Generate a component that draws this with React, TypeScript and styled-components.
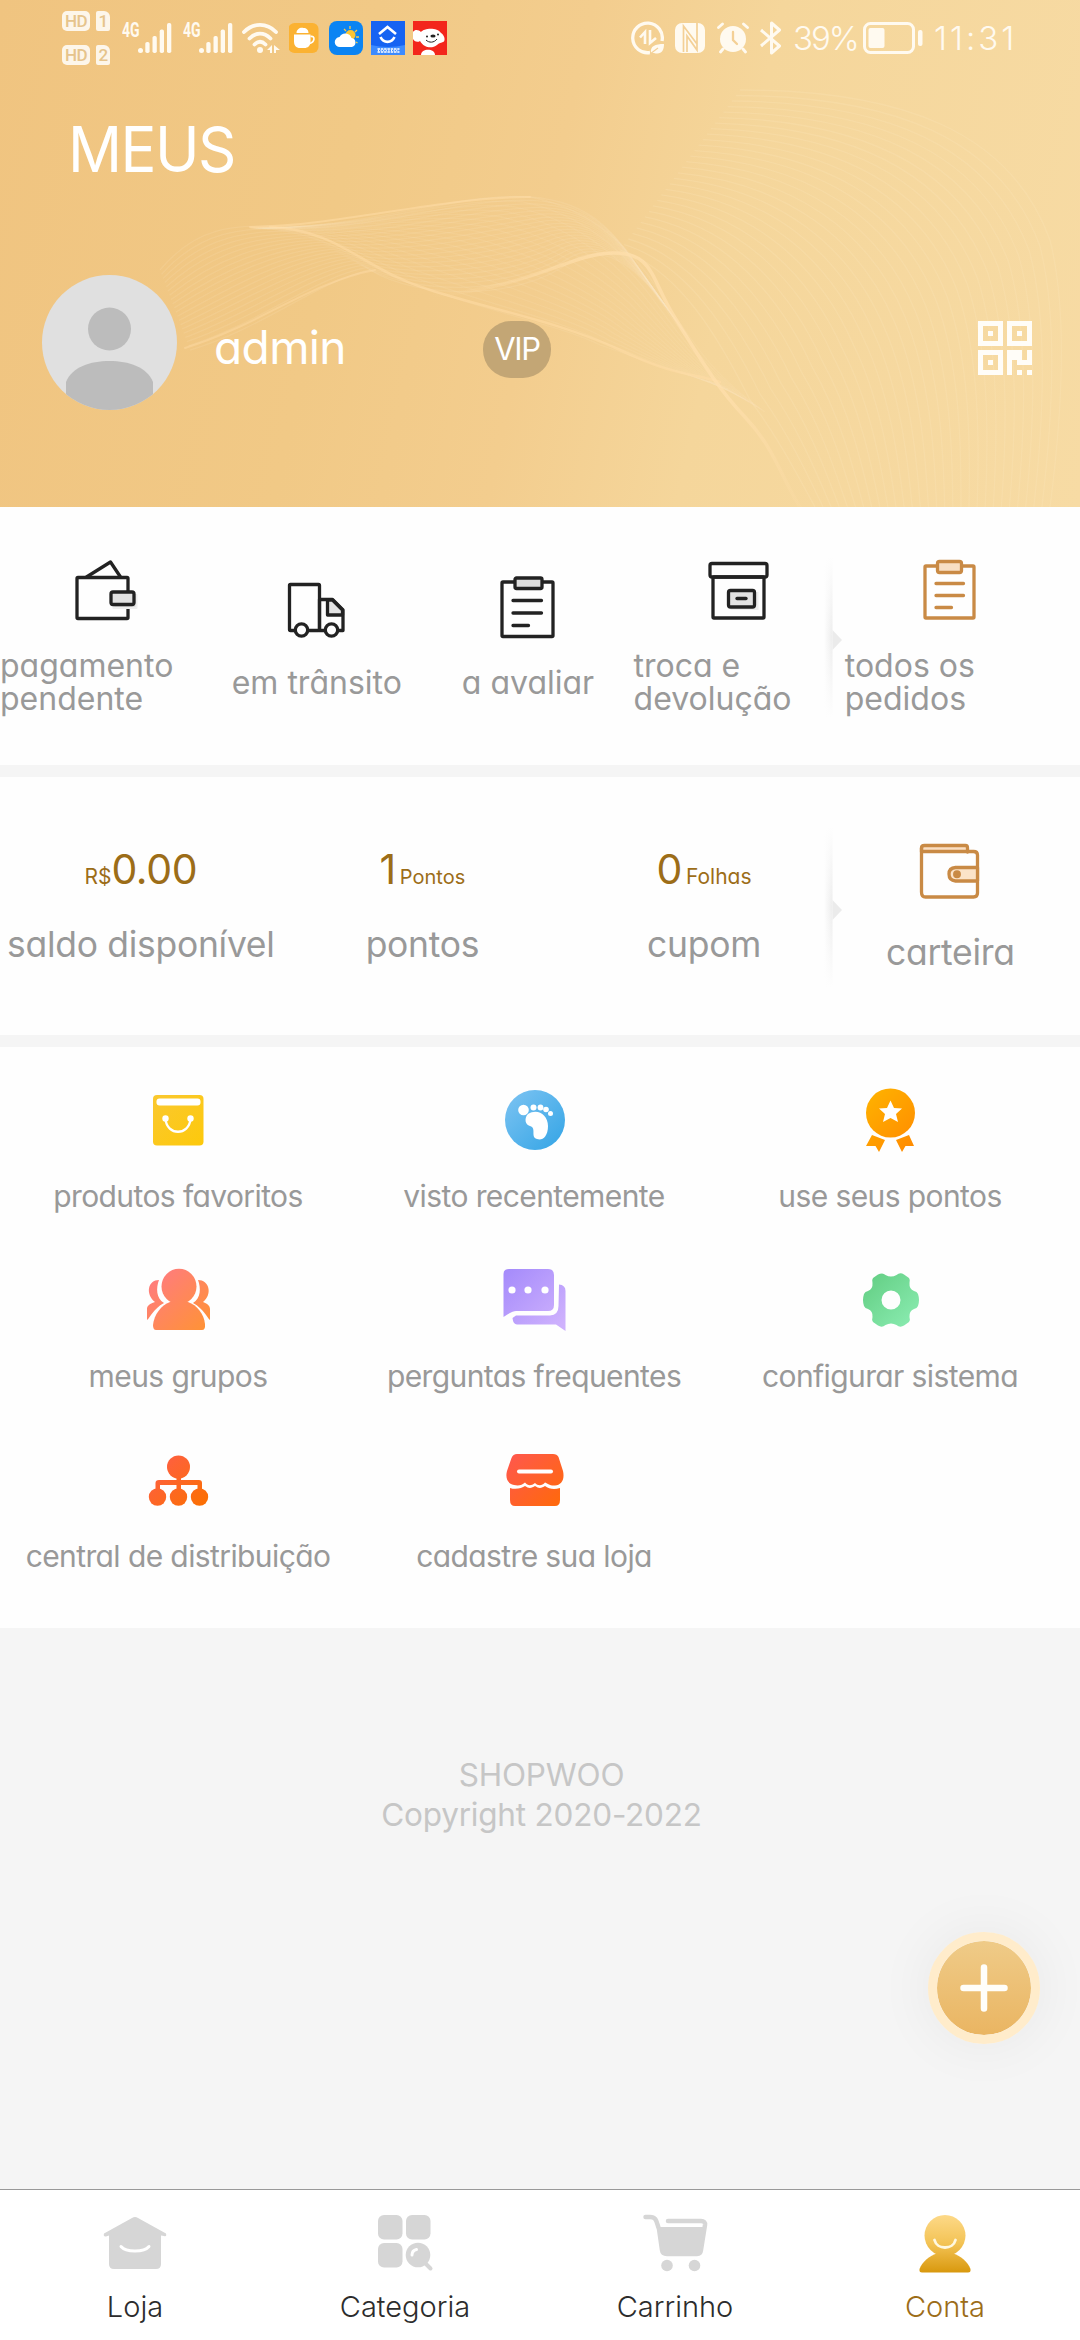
import React from "react";
import styled, { createGlobalStyle, css } from "styled-components";

const gold = "#9c6d18";
const gray = "#999999";
const ink = "#222222";
const amber = "#c98a45";

const GlobalStyle = createGlobalStyle`
  * { box-sizing: border-box; }
  body { margin: 0; background: #f5f5f5; }
  svg { display: block; flex: none; }
`;

const Screen = styled.div`
  width: 1080px;
  height: 2340px;
  display: flex;
  flex-direction: column;
  position: relative;
  overflow: hidden;
  background: #f5f5f5;
  font-family: Inter, "Open Sans", "Noto Sans", sans-serif;
  font-feature-settings: "cv11";
  color: ${gray};
`;

/* ---------- header ---------- */

const Header = styled.header`
  height: 507px;
  flex: none;
  position: relative;
  display: flex;
  flex-direction: column;
  color: #fff;
  background: linear-gradient(102deg, #f0c480 0%, #f1c986 32%, #f3cd8e 50%, #f5d69b 66%, #f7dba4 100%);
`;

const WaveLayer = styled.svg`
  position: absolute;
  inset: 0;
`;

const StatusBar = styled.div`
  height: 75px;
  display: flex;
  justify-content: space-between;
  align-items: center;
  padding: 0 65px 0 62px;
  position: relative;
  color: #fffaf0;
`;

const StatusLeft = styled.div`
  display: flex;
  align-items: center;
  gap: 9px;
`;

const StatusRight = styled.div`
  display: flex;
  align-items: center;
  gap: 11px;
`;

const Sims = styled.div`
  width: 51px;
  display: flex;
  flex-direction: column;
  gap: 14px;
`;

const SimRow = styled.div`
  display: flex;
  gap: 6px;
`;

const Chip = styled.span<{ $w: number; $card?: boolean }>`
  width: ${(p) => p.$w}px;
  height: 20px;
  border-radius: ${(p) => (p.$card ? "2px 6px 2px 2px" : "5px")};
  background: #fdf6ea;
  color: #e6c48c;
  font: 500 17px/21px Roboto, sans-serif;
  letter-spacing: -0.5px;
  text-align: center;
`;

const Signal = styled.div<{ $w: number }>`
  width: ${(p) => p.$w}px;
  height: 32px;
  display: flex;
  align-items: flex-start;
`;

const Network = styled.span`
  width: 16px;
  font: 700 20px/16px Roboto, sans-serif;
  transform: scaleX(0.7);
  transform-origin: left;
`;

const Apps = styled.div`
  display: flex;
  align-items: center;
  gap: 8px;
`;

const StatusText = styled.span<{ $w: number; $ls: number }>`
  width: ${(p) => p.$w}px;
  font-size: 33px;
  font-weight: 300;
  line-height: 36px;
  letter-spacing: ${(p) => p.$ls}px;
  white-space: nowrap;
`;

const Title = styled.h1`
  margin: 0;
  padding: 36px 0 0 68px;
  font-size: 63px;
  font-weight: 400;
  line-height: 76px;
  letter-spacing: -1.6px;
  position: relative;
  transform: scaleX(0.95);
  transform-origin: 68px 0;
`;

const Profile = styled.div`
  position: relative;
  display: flex;
  align-items: center;
  padding: 0 48px 0 42px;
  margin-top: 88px;
  height: 135px;
`;

const UserName = styled.div`
  width: 269px;
  margin-left: 37px;
  padding-top: 8px;
  font-size: 46px;
  line-height: 56px;
  letter-spacing: -0.6px;
`;

const Badge = styled.div`
  width: 68px;
  height: 57px;
  margin-top: 14px;
  border-radius: 28px;
  background: #c3a675;
  font-size: 31px;
  line-height: 55px;
  letter-spacing: -1.4px;
  text-align: center;
`;

const QrButton = styled.div`
  margin-left: auto;
  margin-top: 11px;
`;

/* ---------- sections ---------- */

const Section = styled.section<{ $h: number }>`
  height: ${(p) => p.$h}px;
  flex: none;
  position: relative;
  display: flex;
  align-items: center;
  background: #fefefe;
  margin-bottom: 12px;
  padding-bottom: 3px;
`;

const OrderItem = styled.div`
  width: 211.2px;
  display: flex;
  flex-direction: column;
  align-items: center;
  gap: 23px;
`;

const OrderLabel = styled.div<{ $wrap?: boolean }>`
  font-size: 32px;
  line-height: 33px;
  ${(p) =>
    p.$wrap
      ? css`
          align-self: stretch;
          padding-right: 20px;
        `
      : css`
          white-space: nowrap;
        `}
`;

const Notch = styled.div`
  position: absolute;
  left: 824px;
  top: 50px;
  width: 20px;
  height: 160px;
`;

const Stat = styled.div<{ $w: number; $gap: number }>`
  width: ${(p) => p.$w}px;
  display: flex;
  flex-direction: column;
  align-items: center;
  gap: ${(p) => p.$gap}px;
`;

const StatLabel = styled.div`
  font-size: 35.5px;
  line-height: 44px;
  letter-spacing: -0.3px;
  white-space: nowrap;
`;

const Value = styled.div<{ $gap: number }>`
  display: flex;
  align-items: baseline;
  gap: ${(p) => p.$gap}px;
  color: ${gold};
  font-size: 41px;
  line-height: 50px;
  padding-top: 1px;
`;

const Unit = styled.span<{ $size: number }>`
  font-size: ${(p) => p.$size}px;
  line-height: 24px;
`;

const Num = styled.span`
  letter-spacing: -0.4px;
`;

const Services = styled.section`
  height: 581px;
  flex: none;
  background: #fefefe;
  display: grid;
  grid-template-columns: repeat(3, 356px);
  grid-auto-rows: 180px;
  padding-top: 33px;
`;

const Service = styled.div`
  display: flex;
  flex-direction: column;
  align-items: center;
  gap: 18px;
`;

const ServiceLabel = styled.div`
  font-size: 30px;
  line-height: 36px;
  letter-spacing: -0.6px;
  white-space: nowrap;
`;

const Footer = styled.footer`
  flex: 1;
  padding: 127px 0 0 3px;
  text-align: center;
  font-size: 31.5px;
  line-height: 40px;
  letter-spacing: -0.2px;
  color: #c6c6c6;
`;

const AddButton = styled.button`
  position: absolute;
  left: 928px;
  top: 1932px;
  width: 112px;
  height: 112px;
  padding: 0;
  display: grid;
  place-items: center;
  border: 9px solid #ffeccb;
  border-radius: 50%;
  background: linear-gradient(#efcb88, #eab562) padding-box;
  box-shadow: 0 0 60px rgba(0, 0, 0, 0.06);
`;

const Tabs = styled.nav`
  height: 151px;
  flex: none;
  display: flex;
  background: #fff;
  border-top: 1px solid #999;
`;

const Tab = styled.div<{ $active?: boolean }>`
  flex: 1;
  display: flex;
  flex-direction: column;
  align-items: center;
  padding-top: 17px;
  gap: 10px;
  color: ${(p) => (p.$active ? gold : "#2c2c2c")};
  font-size: 29px;
  font-weight: 350;
  line-height: 36px;
  font-feature-settings: normal;
`;

/* ---------- header artwork ---------- */

type Pts = number[];

function mix(a: Pts, b: Pts, t: number): string {
  const p = a.map((v, i) => (v + (b[i] - v) * t).toFixed(1));
  let d = `M${p[0]} ${p[1]}`;
  for (let i = 2; i < p.length; i += 6) {
    d += `C${p.slice(i, i + 6).join(" ")}`;
  }
  return d;
}

function Family({ a, b, n, o }: { a: Pts; b: Pts; n: number; o: number }) {
  return (
    <g stroke="#ffe9c4" strokeOpacity={o} fill="none" strokeWidth={1.3}>
      {Array.from({ length: n }, (_, i) => (
        <path key={i} d={mix(a, b, i / (n - 1))} />
      ))}
    </g>
  );
}

const Waves = () => (
  <WaveLayer width="1080" height="507" viewBox="0 0 1080 507">
    <defs>
      <linearGradient id="crest" gradientUnits="userSpaceOnUse" x1="430" y1="0" x2="800" y2="0">
        <stop offset="0" stopColor="#ffdca6" stopOpacity="0" />
        <stop offset=".45" stopColor="#ffdfac" />
        <stop offset=".8" stopColor="#ffdfac" />
        <stop offset="1" stopColor="#ffdfac" stopOpacity=".2" />
      </linearGradient>
    </defs>
    <Family
      a={[160, 270, 200, 222, 240, 226, 290, 226, 380, 224, 460, 192, 530, 197, 600, 202, 620, 240, 660, 300]}
      b={[190, 350, 260, 330, 320, 280, 370, 270, 420, 300, 520, 300, 570, 262, 610, 235, 650, 280, 690, 340]}
      n={20}
      o={0.14}
    />
    <Family
      a={[250, 228, 320, 228, 360, 262, 400, 280, 480, 310, 560, 325, 600, 345, 650, 362, 680, 375, 720, 384]}
      b={[270, 228, 400, 224, 460, 192, 530, 197, 600, 210, 640, 260, 665, 300, 700, 355, 720, 380, 765, 412]}
      n={18}
      o={0.13}
    />
    <Family
      a={[620, 250, 680, 270, 720, 340, 750, 400, 780, 440, 800, 480, 815, 507]}
      b={[740, 90, 900, 90, 1010, 130, 1050, 240, 1070, 320, 1060, 430, 1050, 507]}
      n={30}
      o={0.2}
    />
    <g fill="none" stroke="#ffdca6" strokeLinecap="round">
      <path d="M250 227C340 226 440 197 530 197" strokeWidth="2" opacity=".55" />
      <path d="M270 227C340 230 360 268 430 290S560 322 620 350S690 372 720 382" strokeWidth="2.5" opacity=".55" />
      <path d="M185 348C260 325 310 282 375 270" strokeWidth="2" opacity=".45" />
      <path d="M430 296C530 288 570 254 612 253S650 278 675 318S715 385 745 417S780 475 800 507" stroke="url(#crest)" strokeWidth="3.500" opacity=".75" />
    </g>
  </WaveLayer>
);

const Avatar = () => (
  <svg width="135" height="135" viewBox="0 0 135 135">
    <clipPath id="avatarClip"><circle cx="67.5" cy="67.5" r="67.5" /></clipPath>
    <g clipPath="url(#avatarClip)">
      <rect width="135" height="135" fill="#e0e0e0" />
      <circle cx="67.5" cy="54" r="21.5" fill="#bcbcbc" />
      <path d="M24 140V107C30 92 48 86 67.500 86S105 92 111 107V140Z" fill="#bcbcbc" />
    </g>
  </svg>
);

const QrIcon = () => (
  <svg width="54" height="54" viewBox="0 0 54 54" fill="#fffdf8">
    <path fillRule="evenodd" d="M0 0h25v25H0zM5 5v15h15V5zM29 0h25v25H29zM34 5v15h15V5zM0 29h25v25H0zM5 34v15h15V34z" />
    <path d="M10 10h5v5h-5zM39 10h5v5h-5zM10 39h5v5h-5zM29 29h15v10h5V29h5v15H39v-5h-5v15h-5zM39 49h5v5h-5zM49 49h5v5h-5z" />
  </svg>
);

const Bars = () => (
  <svg width="34" height="32" viewBox="0 0 34 32" fill="#fffaf0">
    <circle cx="2.500" cy="28.500" r="2.500" />
    <rect x="7.300" y="20" width="4.300" height="11" rx="1.800" />
    <rect x="14.500" y="14" width="4.300" height="17" rx="1.800" />
    <rect x="21.700" y="7.500" width="4.300" height="23.500" rx="1.800" />
    <rect x="29" y="1" width="4.300" height="30" rx="1.800" />
  </svg>
);

const Wifi = () => (
  <svg width="38" height="32" viewBox="0 0 38 32" fill="none" stroke="#fffaf0" strokeWidth="3.800" strokeLinecap="round">
    <path d="M2 10C11 .5 25 .5 34 10M7.500 16.500C14 10 22 10 28.500 16.500M12.500 22.500C16 19 20 19 23.500 22.500" />
    <circle cx="18" cy="28" r="3" fill="#fffaf0" stroke="none" />
    <path d="M30 23v8h-2v-3h-3zM32 23l6 5h-4v3h-2z" fill="#fffaf0" stroke="none" />
  </svg>
);

const CupApp = () => (
  <svg width="32" height="34" viewBox="0.500 0 32 34">
    <rect y="2" width="30" height="30" rx="6" fill="#fbb232" />
    <path d="M5.500 13.500h16.500v7c0 4.500-3 6.500-6 6.500h-4.500c-4 0-6-2.500-6-6.500z" fill="#fff" />
    <path d="M8 12C8 8 12 6 15 7C18 7 20 9 20 12Z" fill="#fff" />
    <path d="M22 15.500c5-1 4.500 5.500-1 7" fill="none" stroke="#fff" strokeWidth="1.600" />
  </svg>
);

const WeatherApp = () => (
  <svg width="34" height="34" viewBox="0 0 34 34">
    <rect width="34" height="34" rx="8" fill="#0b84f3" />
    <path d="M21 5v3M28 9l-2 2M30 16h-3M15 8l2 2M27 21l1.500 1" stroke="#f7c948" strokeWidth="1.300" />
    <circle cx="21.500" cy="14" r="5" fill="#fcc531" />
    <path d="M11 26a5 5 0 0 1-.5-10a6.500 6.500 0 0 1 12 1a4.600 4.600 0 0 1 .5 9z" fill="#fff" />
  </svg>
);

const CarApp = () => (
  <svg width="34" height="34" viewBox="0 0 34 34">
    <rect width="34" height="34" fill="#1663f2" />
    <path d="M0 24Q17 28 34 24V34H0z" fill="#3d8bff" />
    <path d="M8 13l8.500-7L25 13M9.500 16c3 6.500 11 6.500 14 0" fill="none" stroke="#fff" strokeWidth="2.600" />
    <path d="M6.500 28h22M6.500 31h22" stroke="#fff" strokeWidth="1.500" strokeDasharray="2.500 0.800" />
    <path d="M7 29.500h21" stroke="#fff" strokeWidth="1.500" strokeDasharray="1 1.600" />
  </svg>
);

const DogApp = () => (
  <svg width="34" height="34" viewBox="0 0 34 34">
    <rect width="34" height="34" fill="#f3261c" />
    <path d="M0 11C2 8 6 9 8 11C11 7 24 6 28 12C31 14 32.500 18 31 20.500C28 22 26 22 24 24C19 28 11 27 7 20C4 22 1 20 0 18z" fill="#fff" />
    <path d="M8 34C8 27 22 27 22 34z" fill="#fff" />
    <ellipse cx="20" cy="15" rx="2.600" ry="1.500" fill="#222" />
    <circle cx="14" cy="15.500" r="1" fill="#222" /><circle cx="25" cy="13.500" r="1" fill="#222" />
    <path d="M13 19c3 3 8 3 11-1" stroke="#222" strokeWidth="1" fill="none" />
  </svg>
);

const EcoIcon = () => (
  <svg width="33" height="34" viewBox="0 0 33 34" fill="none" stroke="#fffaf0">
    <path d="M31 20A14.800 14.800 0 1 0 19 31.500" strokeWidth="3.300" />
    <path d="M9 16.500l5-5.500v12M19 9v13l6-5" strokeWidth="2.600" />
    <path d="M20 32c-1-7 4-9 13-9c0 7-3 11-10 9z" fill="#fffaf0" stroke="none" />
    <path d="M19 33l8-6" stroke="#f4d096" strokeWidth="1.200" />
  </svg>
);

const NfcIcon = () => (
  <svg width="31" height="32" viewBox="0 0 31 32">
    <rect y="1" width="30" height="30" rx="7" fill="#fffaf0" />
    <path d="M8.500 30V4L22 22V1M8.500 4V30M22 2V28L12 14V30" fill="none" stroke="#f4d096" strokeWidth="1.700" />
  </svg>
);

const AlarmIcon = () => (
  <svg width="32" height="32" viewBox="0 0 32 32" fill="none" stroke="#fffaf0" strokeLinecap="round">
    <circle cx="16" cy="17" r="13" fill="#fffaf0" stroke="none" />
    <path d="M1.500 5.500l4-3.500M30.500 5.500l-4-3.500M6 27l-2.500 3M26 27l2.500 3" strokeWidth="2.800" />
    <path d="M16 10v8l4 4" stroke="#f4d096" strokeWidth="2.300" />
  </svg>
);

const BluetoothIcon = () => (
  <svg width="22" height="36" viewBox="0 0 22 36" fill="none" stroke="#fffaf0" strokeWidth="3" strokeLinejoin="round">
    <path d="M1 10L19.500 26L11.500 33V3L19.500 10L1 26" />
  </svg>
);

const BatteryIcon = () => (
  <svg width="60" height="34" viewBox="0 0 60 34">
    <rect x="1.500" y="2.500" width="49" height="29" rx="6" fill="none" stroke="#fffaf0" strokeWidth="3" />
    <rect x="5.500" y="7" width="16" height="20" rx="2" fill="#fffaf0" />
    <rect x="55" y="9" width="4.500" height="16" rx="2" fill="#fffaf0" />
  </svg>
);

/* ---------- order icons ---------- */

const LineIcon = ({ color = ink, children }: { color?: string; children: React.ReactNode }) => (
  <svg width="72" height="72" viewBox="0.500 0 72 72" fill="none" stroke={color} strokeWidth="3.300" strokeLinejoin="round" strokeLinecap="round">
    {children}
  </svg>
);

const PayIcon = () => (
  <LineIcon>
    <path d="M17 23L41 8L51 23" />
    <rect x="7.500" y="23.500" width="51" height="41" rx="1" />
    <rect x="44" y="41" width="23" height="13" fill="#ddd" stroke="#eee" strokeWidth="2" />
    <rect x="41.500" y="38" width="23" height="12.500" rx="2" fill="#e2e2e2" />
  </LineIcon>
);

const TruckIcon = () => (
  <LineIcon>
    <rect x="9" y="13.500" width="30" height="46" rx="1" />
    <path d="M39 28.500H52L62.500 39V59.500H39Z" />
    <path d="M47 29V44H62V39L52 29Z" fill="#e4e4e4" />
    <circle cx="21" cy="59" r="6.200" fill="#fefefe" />
    <circle cx="51" cy="59" r="6.200" fill="#fefefe" />
  </LineIcon>
);

const ReviewIcon = () => (
  <LineIcon>
    <rect x="10.500" y="11" width="51" height="54.500" rx="1" />
    <rect x="23.500" y="7" width="27" height="10.500" rx="1.500" fill="#dedede" />
    <path d="M21.500 29.500H50M21.500 42H50M21.500 54.500H37" />
  </LineIcon>
);

const ReturnIcon = () => (
  <LineIcon>
    <rect x="7.500" y="9.500" width="57" height="13.500" rx="2" />
    <rect x="10.500" y="23" width="51" height="41" rx="1" />
    <rect x="28" y="38" width="28" height="18" fill="#eee" stroke="none" />
    <rect x="26" y="36.500" width="26" height="16.500" rx="2" fill="#e2e2e2" />
    <path d="M34.500 44.500H43.500" />
  </LineIcon>
);

const OrdersIcon = () => (
  <LineIcon color={amber}>
    <rect x="11.500" y="12" width="49" height="52" rx="1" />
    <rect x="24" y="7.500" width="24" height="11" rx="2" fill="#f8dfc4" />
    <path d="M22.500 29.500H50M22.500 41.500H50M22.500 53.500H38" />
  </LineIcon>
);

const WalletIcon = () => (
  <LineIcon color={amber}>
    <path d="M8 17V13Q8 10.500 11 10.500H52Q54 10.500 54 13V17" fill="#fbdfc3" />
    <path d="M8 13V57Q8 62 12 62H60Q64 62 64 58V20Q64 16.500 60 16.500H10" />
    <path d="M64 32.500H42Q35.500 33 35.500 39Q35.500 45.500 42 46H64Z" fill="#fbe3c9" />
    <circle cx="43.500" cy="39.300" r="2.300" fill={amber} />
  </LineIcon>
);

const NotchShape = () => (
  <Notch>
    <svg width="20" height="160" viewBox="0 0 20 160">
      <defs>
        <linearGradient id="nx"><stop offset="0" stopColor="#fefefe" /><stop offset="1" stopColor="#ececec" /></linearGradient>
        <linearGradient id="ny" x1="0" y1="0" x2="0" y2="1">
          <stop offset="0" stopColor="#fefefe" /><stop offset=".5" stopColor="#fefefe" stopOpacity="0" /><stop offset="1" stopColor="#fefefe" />
        </linearGradient>
      </defs>
      <rect width="8.500" height="160" fill="url(#nx)" />
      <rect width="9" height="160" fill="url(#ny)" />
      <path d="M8.500 73L18 83L8.500 93Z" fill="#ebebeb" />
    </svg>
  </Notch>
);

/* ---------- service icons ---------- */

const ColorIcon = ({ id, from, to, children }: { id: string; from: string; to: string; children: React.ReactNode }) => (
  <svg width="80" height="80" viewBox="0 0 80 80" fill={`url(#${id})`}>
    <linearGradient id={id} gradientUnits="userSpaceOnUse" x1="12" y1="12" x2="66" y2="68">
      <stop offset="0" stopColor={from} />
      <stop offset="1" stopColor={to} />
    </linearGradient>
    {children}
  </svg>
);

const services: { label: string; icon: React.ReactNode }[] = [
  {
    label: "produtos favoritos",
    icon: (
      <ColorIcon id="bag" from="#fac832" to="#fdc90a">
        <rect x="15" y="15" width="50.500" height="50.500" rx="4" />
        <rect x="18.500" y="18.500" width="44" height="7" rx="3" fill="#fff" />
        <g fill="#fff"><circle cx="27.500" cy="38.500" r="3.200" /><circle cx="52.500" cy="38.500" r="3.200" /></g>
        <path d="M27.500 39C29 56 51 56 52.500 39" fill="none" stroke="#fff" strokeWidth="2.400" />
      </ColorIcon>
    ),
  },
  {
    label: "visto recentemente",
    icon: (
      <ColorIcon id="foot" from="#7cc3f2" to="#37a6e6">
        <circle cx="41" cy="40" r="30" />
        <g fill="#fff">
          <path d="M34 34C43 28 54 34 54 46C54 57 48 61 43 59C36 57 43 48 36 46C31 45 30 38 34 34Z" />
          <circle cx="29.500" cy="30" r="5.300" /><circle cx="39.500" cy="27.500" r="3" />
          <circle cx="46.500" cy="27.500" r="2.900" /><circle cx="52" cy="29.500" r="2.800" /><circle cx="56.500" cy="33.500" r="2.500" />
        </g>
      </ColorIcon>
    ),
  },
  {
    label: "use seus pontos",
    icon: (
      <ColorIcon id="medal" from="#ffb400" to="#ff8a00">
        <circle cx="40.500" cy="33" r="24.500" />
        <path d="M22 55L35 60L29 72L25.500 66L16 66ZM59 55L46 60L52 72L55.500 66L64 66Z" />
        <path d="M40.500 20.500L44 28L52 28.500L46 34L48 42L40.500 38L33 42L35 34L29 28.500L37 28Z" fill="#fff" />
      </ColorIcon>
    ),
  },
  {
    label: "meus grupos",
    icon: (
      <ColorIcon id="group" from="#ff7a83" to="#ff9238">
        <path d="M21 20C10 20 7 34 17 42C11 44 9 46 9 49V60C12 58 15 49 26 43C18 38 18 28 21 20ZM60 20C71 20 75 34 65 42C70 44 72 46 72 49V60C69 58 66 49 55 43C63 38 63 28 60 20Z" />
        <ellipse cx="41" cy="26.500" rx="17.500" ry="17.800" />
        <path d="M32 42H50C59 45 66 54 67 64Q67.500 70 64 70H18Q15 70 15 65C16 55 23 45 32 42Z" />
      </ColorIcon>
    ),
  },
  {
    label: "perguntas frequentes",
    icon: (
      <ColorIcon id="chat" from="#a68cfb" to="#cfb2fd">
        <path d="M9.500 14Q9.500 9 15 9H54Q60 9 60 15V45Q60 51 54 51H22Q18 51 9.500 57Z" />
        <path d="M65 24.500Q71.500 25 71.500 31V71L62 64.500H23Q19 64 18.500 58L22 55.500H56Q64.500 55 64.500 46Z" />
        <g fill="#fff"><circle cx="18" cy="30" r="3.600" /><circle cx="34" cy="30" r="3.600" /><circle cx="51" cy="30" r="3.600" /></g>
      </ColorIcon>
    ),
  },
  {
    label: "configurar sistema",
    icon: (
      <ColorIcon id="gear" from="#60cc80" to="#8cedb3">
        <path
          fillRule="evenodd"
          d="M32 13.500Q34 13.500 35.500 15Q41 18 46.500 15Q50 12 54 14.500L59 18Q60.500 20 59.500 23Q59 29 64 31Q67 31.500 68 34Q70 40 68 46Q67 48.500 64 49Q59 51 59.500 57Q60.500 60 59 62L54 65.500Q50 68 46.500 65Q41 62 35.500 65Q32 68 28 65.500L23 62Q21.500 60 22.500 57Q23 51 18 49Q15 48.500 14 46Q12 40 14 34Q15 31.500 18 31Q23 29 22.500 23Q21.500 20 23 18L28 14.500Q30 13.500 32 13.500ZM41 30.500A9.500 9.500 0 1 0 41 49.500A9.500 9.500 0 1 0 41 30.500Z"
        />
      </ColorIcon>
    ),
  },
  {
    label: "central de distribuição",
    icon: (
      <ColorIcon id="org" from="#ff5c4e" to="#fb7000">
        <circle cx="40.500" cy="27" r="11.500" />
        <path d="M38.500 36H43V40H61Q64 40 64 43V52H59.500V45H43V52H38.500V45H22V52H17.500V43Q17.500 40 21 40H38.500Z" />
        <circle cx="19.500" cy="57" r="8.700" /><circle cx="40.500" cy="57" r="8.700" /><circle cx="61.500" cy="57" r="8.700" />
      </ColorIcon>
    ),
  },
  {
    label: "cadastre sua loja",
    icon: (
      <ColorIcon id="shop" from="#ff5651" to="#ff6a09">
        <path d="M23 14H59Q63 14 64.500 17L69 31C71 40 67 45 61 45.500C56 46 53 43 51 42.500C48 46 44 46 41 43C37 46 34 46 31 42.500C28 45 25 46 20 45C14 44 11 38 13 31L17.500 18Q19 14 23 14Z" />
        <path d="M16 48C22 50 28 48 31 46C35 49 38 48 41 46C45 49 48 48 51 46C55 49 60 50 66 48V60Q66 66 61 66H21Q16 66 16 60Z" />
        <path d="M25 31.500H57" stroke="#fff" strokeWidth="4" strokeLinecap="round" />
      </ColorIcon>
    ),
  },
];

/* ---------- tab icons ---------- */

const TabIcon = ({ children }: { children: React.ReactNode }) => (
  <svg width="72" height="72" viewBox="0 0 72 72" fill="#d6d6d6">
    {children}
  </svg>
);

const HomeTab = () => (
  <TabIcon>
    <path d="M33 11Q36 9 39 11L67 26.500Q68 30 65 29L62 28.500V57Q62 62 57 62H15Q10 62 10 57V28.500L7 29.500Q4 30 5 26.500Z" />
    <path d="M22 39.500C27 45.500 45 45.500 50 39.500" fill="none" stroke="#fff" strokeWidth="3" strokeLinecap="round" />
  </TabIcon>
);

const CategoryTab = () => (
  <TabIcon>
    <rect x="9" y="8" width="24.500" height="24.500" rx="6" />
    <rect x="37" y="8" width="24.500" height="24.500" rx="6" />
    <rect x="9" y="36" width="24.500" height="24.500" rx="6" />
    <circle cx="49" cy="48" r="12.300" />
    <path d="M56 56L61.500 61.500" stroke="#d6d6d6" strokeWidth="4" strokeLinecap="round" />
    <path d="M43 48Q43 43.500 47.500 42.500" stroke="#fff" strokeWidth="3" fill="none" strokeLinecap="round" />
  </TabIcon>
);

const CartTab = () => (
  <TabIcon>
    <path d="M6.500 10H11C18 10 17.500 16 20 22L23 43Q23.500 47 28 47H58Q61.500 47 62 43L66 18Q66.500 14 62 14H29" fill="none" stroke="#d6d6d6" strokeWidth="4.500" strokeLinecap="round" />
    <path d="M20 20H65L62 44Q61 48 58 48H27Q23 47 22.500 42Z" />
    <circle cx="28" cy="58.500" r="5.800" /><circle cx="55.500" cy="58.500" r="5.800" />
  </TabIcon>
);

const AccountTab = () => (
  <TabIcon>
    <linearGradient id="acc" gradientUnits="userSpaceOnUse" x1="0" y1="8" x2="0" y2="65">
      <stop offset="0" stopColor="#fdd988" /><stop offset=".5" stopColor="#f3c355" /><stop offset="1" stopColor="#d9990f" />
    </linearGradient>
    <g fill="url(#acc)">
      <circle cx="36" cy="28.500" r="20.500" />
      <path d="M29 46H43C52 49 59 55 61.500 62Q62 65.500 59 65.500H13Q10 65.500 10.500 62C13 55 20 49 29 46Z" />
    </g>
    <path d="M25.500 33C28 43 44 43 46.500 33" fill="none" stroke="#fff8e0" strokeWidth="2.800" strokeLinecap="round" />
  </TabIcon>
);

export default function App() {
  return (
    <Screen>
      <GlobalStyle />
      <Header>
        <Waves />
        <StatusBar>
          <StatusLeft>
            <Sims>
              {["1", "2"].map((n) => (
                <SimRow key={n}>
                  <Chip $w={28}>HD</Chip>
                  <Chip $w={14} $card>{n}</Chip>
                </SimRow>
              ))}
            </Sims>
            <Signal $w={52}><Network>4G</Network><Bars /></Signal>
            <Signal $w={50}><Network>4G</Network><Bars /></Signal>
            <Wifi />
            <Apps><CupApp /><WeatherApp /><CarApp /><DogApp /></Apps>
          </StatusLeft>
          <StatusRight>
            <EcoIcon />
            <NfcIcon />
            <AlarmIcon />
            <BluetoothIcon />
            <StatusText $w={59} $ls={-2}>39%</StatusText>
            <BatteryIcon />
            <StatusText $w={81} $ls={3}>11:31</StatusText>
          </StatusRight>
        </StatusBar>
        <Title>MEUS</Title>
        <Profile>
          <Avatar />
          <UserName>admin</UserName>
          <Badge>VIP</Badge>
          <QrButton><QrIcon /></QrButton>
        </Profile>
      </Header>

      <Section $h={258}>
        <OrderItem><PayIcon /><OrderLabel $wrap>pagamento pendente</OrderLabel></OrderItem>
        <OrderItem><TruckIcon /><OrderLabel>em trânsito</OrderLabel></OrderItem>
        <OrderItem><ReviewIcon /><OrderLabel>a avaliar</OrderLabel></OrderItem>
        <OrderItem><ReturnIcon /><OrderLabel $wrap>troca e devolução</OrderLabel></OrderItem>
        <OrderItem><OrdersIcon /><OrderLabel $wrap>todos os pedidos</OrderLabel></OrderItem>
        <NotchShape />
      </Section>

      <Section $h={258}>
        <Stat $w={281.6} $gap={29}>
          <Value $gap={0}><Unit $size={21}>R$</Unit><Num>0.00</Num></Value>
          <StatLabel>saldo disponível</StatLabel>
        </Stat>
        <Stat $w={281.6} $gap={29}>
          <Value $gap={4}><Num>1</Num><Unit $size={20}>Pontos</Unit></Value>
          <StatLabel>pontos</StatLabel>
        </Stat>
        <Stat $w={281.6} $gap={29}>
          <Value $gap={4}><Num>0</Num><Unit $size={21}>Folhas</Unit></Value>
          <StatLabel>cupom</StatLabel>
        </Stat>
        <Stat $w={211.2} $gap={24}>
          <WalletIcon />
          <StatLabel>carteira</StatLabel>
        </Stat>
        <NotchShape />
      </Section>

      <Services>
        {services.map((s) => (
          <Service key={s.label}>
            {s.icon}
            <ServiceLabel>{s.label}</ServiceLabel>
          </Service>
        ))}
      </Services>

      <Footer>
        SHOPWOO
        <br />
        Copyright 2020-2022
      </Footer>

      <Tabs>
        <Tab><HomeTab />Loja</Tab>
        <Tab><CategoryTab />Categoria</Tab>
        <Tab><CartTab />Carrinho</Tab>
        <Tab $active><AccountTab />Conta</Tab>
      </Tabs>

      <AddButton aria-label="+">
        <svg width="48" height="48" viewBox="0 0 48 48" stroke="#fffefa" strokeWidth="6.500" strokeLinecap="round">
          <path d="M24 3.500V44.500M3.500 24H44.500" />
        </svg>
      </AddButton>
    </Screen>
  );
}
